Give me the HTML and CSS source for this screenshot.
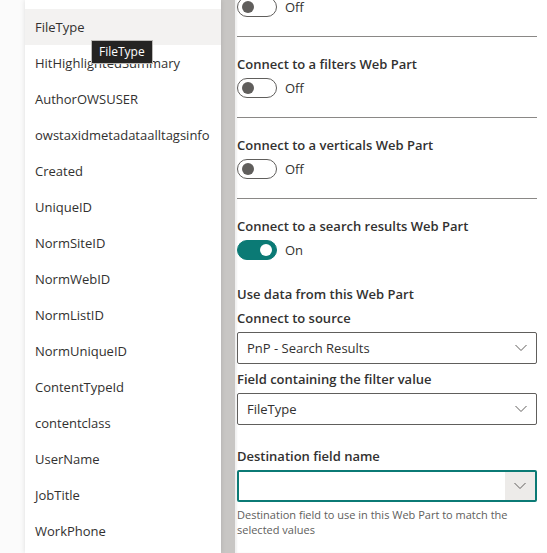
FILE: index.html
```html
<!DOCTYPE html>
<html>
<head>
<meta charset="utf-8">
<link rel="stylesheet" href="styles.css">
</head>
<body>
<div class="page">
  <div class="gutter"></div>
  <div class="list">
    <div class="item selected"><span>FileType</span></div>
    <div class="item"><span>HitHighlightedSummary</span></div>
    <div class="item"><span>AuthorOWSUSER</span></div>
    <div class="item"><span>owstaxidmetadataalltagsinfo</span></div>
    <div class="item"><span>Created</span></div>
    <div class="item"><span>UniqueID</span></div>
    <div class="item"><span>NormSiteID</span></div>
    <div class="item"><span>NormWebID</span></div>
    <div class="item"><span>NormListID</span></div>
    <div class="item"><span>NormUniqueID</span></div>
    <div class="item"><span>ContentTypeId</span></div>
    <div class="item"><span>contentclass</span></div>
    <div class="item"><span>UserName</span></div>
    <div class="item"><span>JobTitle</span></div>
    <div class="item"><span>WorkPhone</span></div>
    <div class="tooltip">FileType</div>
  </div>
  <div class="scrollbar"></div>
  <div class="panel">
    <div class="toggle-row first">
      <span class="toggle"><span class="knob"></span></span><span class="state">Off</span>
    </div>
    <div class="divider"></div>
    <div class="label">Connect to a filters Web Part</div>
    <div class="toggle-row">
      <span class="toggle"><span class="knob"></span></span><span class="state">Off</span>
    </div>
    <div class="divider"></div>
    <div class="label">Connect to a verticals Web Part</div>
    <div class="toggle-row">
      <span class="toggle"><span class="knob"></span></span><span class="state">Off</span>
    </div>
    <div class="divider"></div>
    <div class="label">Connect to a search results Web Part</div>
    <div class="toggle-row">
      <span class="toggle on"><span class="knob"></span></span><span class="state">On</span>
    </div>
    <div class="label heading">Use data from this Web Part</div>
    <div class="label sub">Connect to source</div>
    <div class="dropdown">
      <span class="value">PnP - Search Results</span>
      <span class="chev"><svg width="12" height="8" viewBox="0 0 12 8"><polyline points="0.5,1 6,6.5 11.5,1" fill="none" stroke="#605e5c" stroke-width="1"/></svg></span>
    </div>
    <div class="label sub field">Field containing the filter value</div>
    <div class="dropdown">
      <span class="value">FileType</span>
      <span class="chev"><svg width="12" height="8" viewBox="0 0 12 8"><polyline points="0.5,1 6,6.5 11.5,1" fill="none" stroke="#605e5c" stroke-width="1"/></svg></span>
    </div>
    <div class="label dest">Destination field name</div>
    <div class="dropdown focused">
      <span class="value"></span>
      <span class="chev"><svg width="12" height="8" viewBox="0 0 12 8"><polyline points="0.5,1 6,6.5 11.5,1" fill="none" stroke="#605e5c" stroke-width="1"/></svg></span>
    </div>
    <div class="desc">Destination field to use in this Web Part to match the selected values</div>
  </div>
</div>
</body>
</html>
```
FILE: styles.css
```css
html, body {
  margin: 0;
  padding: 0;
  background: #ffffff;
  overflow: hidden;
}
body {
  font-family: "Open Sans", "Noto Sans", sans-serif;
  color: #323130;
  font-size: 14px;
}
.page {
  display: flex;
  width: 547px;
  height: 553px;
  overflow: hidden;
}
.gutter {
  width: 25px;
  flex: none;
  background: #fbfbfb;
}
.list {
  position: relative;
  box-sizing: border-box;
  width: 196px;
  flex: none;
  padding-top: 9px;
  background: #ffffff;
  box-shadow: 0 0 5px rgba(0, 0, 0, 0.12);
  z-index: 1;
}
.item {
  display: flex;
  align-items: center;
  box-sizing: border-box;
  width: 196px;
  height: 36px;
  padding-left: 10px;
  font-size: 13px;
  white-space: nowrap;
}
.item span {
  display: block;
}
.item.selected {
  background: #f3f2f1;
}
.tooltip {
  position: absolute;
  left: 66px;
  top: 40px;
  height: 22px;
  line-height: 22px;
  padding: 0 7px;
  background: #252423;
  border: 1px solid #bdbbb8;
  color: #ffffff;
  font-size: 12px;
}
.scrollbar {
  width: 14px;
  flex: none;
  background: #c8c6c4;
}
.panel {
  flex: 1;
  padding: 0 10px 0 2px;
  margin-top: -3px;
  background: #ffffff;
  box-shadow: inset 2px 0 2px rgba(0, 0, 0, 0.06);
}
.label {
  font-weight: 600;
  font-size: 13px;
  line-height: 20px;
  margin-top: 17px;
}
.label.heading {
  margin-top: 24px;
}
.label.sub {
  margin-top: 4px;
}
.label.sub.field {
  margin-top: 5px;
}
.label.dest {
  margin-top: 21px;
}
.toggle-row {
  display: flex;
  align-items: center;
  height: 20px;
  margin-top: 4px;
}
.toggle-row.first {
  margin-top: 0;
}
.toggle {
  position: relative;
  box-sizing: border-box;
  width: 40px;
  height: 20px;
  border: 1px solid #605e5c;
  border-radius: 10px;
  flex: none;
}
.toggle .knob {
  position: absolute;
  left: 4px;
  top: 3px;
  width: 12px;
  height: 12px;
  border-radius: 50%;
  background: #605e5c;
}
.toggle.on {
  background: #0b7a75;
  border-color: #0b7a75;
}
.toggle.on .knob {
  left: auto;
  right: 4px;
  background: #ffffff;
}
.state {
  margin-left: 8px;
  font-size: 13px;
}
.divider {
  height: 1px;
  background: #8a8886;
  margin-top: 19px;
}
.dropdown {
  display: flex;
  align-items: center;
  box-sizing: border-box;
  height: 32px;
  border: 1px solid #605e5c;
  border-radius: 2px;
  margin-top: 4px;
}
.dropdown .value {
  flex: 1;
  padding-left: 9px;
  font-size: 13px;
}
.dropdown .chev {
  display: flex;
  align-items: center;
  justify-content: center;
  width: 30px;
  align-self: stretch;
}
.dropdown.focused {
  border: 2px solid #0b7a75;
}
.dropdown.focused .chev {
  background: #edebe9;
}
.desc {
  font-size: 11px;
  line-height: 15px;
  color: #605e5c;
  margin-top: 5px;
  padding-right: 20px;
}
```
